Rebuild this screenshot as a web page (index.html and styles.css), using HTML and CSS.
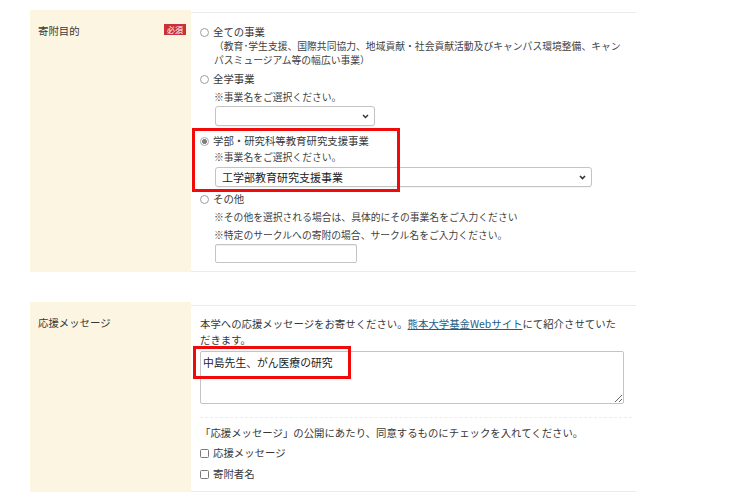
FILE: index.html
```html
<!DOCTYPE html>
<html lang="ja">
<head>
<meta charset="utf-8">
<title>寄附フォーム</title>
<link rel="stylesheet" href="styles.css">
</head>
<body>
<div class="form">
  <div class="row row-purpose">
    <div class="th"><span class="th-label">寄附目的</span><span class="req">必須</span></div>
    <div class="td td-purpose">
      <div class="opt">
        <div class="radio-line"><span class="radio"></span><span>全ての事業</span></div>
        <p class="note note-all">（教育･学生支援、国際共同協力、地域貢献・社会貢献活動及びキャンパス環境整備、キャンパスミュージアム等の幅広い事業）</p>
      </div>
      <div class="opt opt-gakuji">
        <div class="radio-line"><span class="radio"></span><span>全学事業</span></div>
        <p class="note note-sel">※事業名をご選択ください。</p>
        <div class="select select-short">
          <span class="select-text"></span>
          <svg class="chev" width="7" height="5" viewBox="0 0 7 5"><path d="M1 1 L3.5 3.6 L6 1" fill="none" stroke="#333" stroke-width="1.4"/></svg>
        </div>
      </div>
      <div class="opt opt-faculty">
        <div class="radio-line"><span class="radio radio-on"></span><span>学部・研究科等教育研究支援事業</span></div>
        <p class="note note-sel2">※事業名をご選択ください。</p>
        <div class="select select-long">
          <span class="select-text">工学部教育研究支援事業</span>
          <svg class="chev" width="7" height="5" viewBox="0 0 7 5"><path d="M1 1 L3.5 3.6 L6 1" fill="none" stroke="#333" stroke-width="1.6"/></svg>
        </div>
        <div class="mark mark-faculty"></div>
      </div>
      <div class="opt opt-other">
        <div class="radio-line"><span class="radio"></span><span>その他</span></div>
        <div class="notes-other">
          <p class="note">※その他を選択される場合は、具体的にその事業名をご入力ください</p>
          <p class="note">※特定のサークルへの寄附の場合、サークル名をご入力ください。</p>
        </div>
        <div class="text-input"></div>
      </div>
    </div>
  </div>

  <div class="row row-message">
    <div class="th"><span class="th-label">応援メッセージ</span></div>
    <div class="td td-message">
      <p class="lead">本学への応援メッセージをお寄せください。<a class="link" href="#">熊本大学基金Webサイト</a>にて紹介させていた<br>だきます。</p>
      <div class="ta-wrap">
        <textarea class="ta" readonly>中島先生、がん医療の研究</textarea>
        <div class="mark mark-message"></div>
      </div>
      <div class="publish">
        <p class="publish-lead">「応援メッセージ」の公開にあたり、同意するものにチェックを入れてください。</p>
        <div class="check-line check-first"><span class="check"></span><span>応援メッセージ</span></div>
        <div class="check-line check-second"><span class="check"></span><span>寄附者名</span></div>
      </div>
    </div>
  </div>
</div>
</body>
</html>
```

FILE: styles.css
```css
* {
  box-sizing: border-box;
  margin: 0;
  padding: 0;
}

body {
  margin: 0;
  background: #fff;
  font-family: "Noto Sans CJK JP", "Noto Sans", sans-serif;
  font-size: 10.4px;
  color: #383838;
}

.form {
  width: 736px;
  padding: 10px 100px 0 30px;
}

.row {
  display: flex;
}

.row-message {
  margin-top: 30px;
}

.th {
  width: 161px;
  flex: none;
  background: #fbf5e1;
  padding: 14px 5px 0 8px;
  display: flex;
  justify-content: space-between;
  align-items: flex-start;
  line-height: 14px;
  color: #383838;
}

.req {
  margin-top: 0;
  background: #c9303a;
  color: #fff;
  font-size: 8px;
  line-height: 11px;
  padding: 0 3px;
}

.td {
  flex: 1;
  border-top: 1px solid #ebebeb;
  border-bottom: 1px solid #ebebeb;
}

.td-purpose {
  margin-top: 2px;
  padding: 12px 12px 8px 9px;
}

.td-message {
  margin-top: 3px;
  padding: 10px 4px 10px 9px;
}

.opt {
  position: relative;
}

.radio-line {
  display: flex;
  align-items: center;
  height: 14px;
  line-height: 14px;
}

.radio {
  width: 9px;
  height: 9px;
  border: 1px solid #a0a0a0;
  border-radius: 50%;
  background: #fff;
  margin-right: 4px;
  flex: none;
}

.radio-on {
  background: radial-gradient(circle, #808080 0, #808080 2.2px, #fff 2.6px);
  border-color: #a8a8a8;
}

.note {
  font-size: 9.8px;
  line-height: 14px;
  padding-left: 14px;
  color: #3f3f3f;
}

.note-all {
  width: 424px;
}

.opt-gakuji {
  margin-top: 5px;
}

.note-sel {
  margin-top: 4px;
}

.select {
  margin-left: 15px;
  height: 20px;
  border: 1px solid #c4c4c4;
  border-radius: 3px;
  background: #fff;
  box-shadow: 0 1px 1px rgba(0, 0, 0, 0.05);
  display: flex;
  align-items: center;
  justify-content: space-between;
  padding: 0 5px 0 6px;
}

.select-short {
  margin-top: 2px;
  width: 160px;
}

.select-long {
  margin-top: 3px;
  width: 377px;
}

.select-text {
  font-size: 11px;
  color: #222;
  line-height: 18px;
}

.chev {
  display: block;
  flex: none;
}

.opt-faculty {
  margin-top: 8px;
}

.note-sel2 {
  margin-top: 2px;
}

.opt-other {
  margin-top: 5px;
}

.notes-other {
  margin-top: 2px;
}

.notes-other .note {
  line-height: 18px;
}

.text-input {
  margin-left: 15px;
  width: 142px;
  height: 19px;
  border: 1px solid #c4c4c4;
  border-radius: 2px;
  background: #fff;
  box-shadow: inset 0 1px 1px rgba(0, 0, 0, 0.07);
}

.mark {
  position: absolute;
  border: 3px solid #f00a0a;
  pointer-events: none;
}

.mark-faculty {
  left: -8px;
  top: -6px;
  width: 208px;
  height: 64px;
}

.lead {
  line-height: 16px;
  width: 424px;
  white-space: nowrap;
}

.link {
  color: #1c5e86;
  text-decoration: underline;
}

.ta-wrap {
  position: relative;
  margin-top: 3px;
  width: 424px;
}

.ta {
  display: block;
  width: 424px;
  height: 53px;
  border: 1px solid #c4c4c4;
  border-radius: 2px;
  padding: 2px 2px;
  font-family: "Noto Sans CJK JP", "Noto Sans", sans-serif;
  font-size: 10.8px;
  line-height: 16px;
  color: #222;
  background: #fff;
  resize: both;
  outline: none;
}

.mark-message {
  left: -7px;
  top: -5px;
  width: 158px;
  height: 33px;
}

.publish {
  margin-top: 13px;
  border-top: 1px dashed #ececec;
  padding-top: 8px;
}

.publish-lead {
  line-height: 14px;
}

.check-line {
  display: flex;
  align-items: center;
  height: 14px;
  line-height: 14px;
}

.check-first {
  margin-top: 6px;
}

.check-second {
  margin-top: 7px;
}

.check {
  width: 9px;
  height: 9px;
  border: 1px solid #7a7a7a;
  border-radius: 1.5px;
  background: #fff;
  margin-right: 4px;
  flex: none;
}
```
